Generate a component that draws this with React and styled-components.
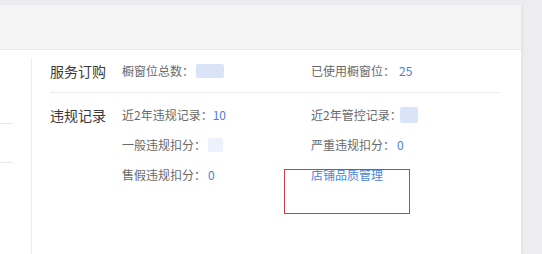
import React from 'react';
import styled, { createGlobalStyle } from 'styled-components';

const GlobalStyle = createGlobalStyle`
    html, body {
        margin: 0;
        padding: 0;
        background: #ededf1;
        font-family: "Noto Sans CJK SC", "Noto Sans", sans-serif;
    }
`;

const Page = styled.div`
    width: 542px;
    height: 254px;
    padding: 5px 21px 0 0;
    box-sizing: border-box;
    overflow: hidden;
`;

const Card = styled.div`
    background: #fff;
    height: 100%;
    box-shadow: 2px 0 2px rgba(0, 0, 0, 0.04);
    display: flex;
    flex-direction: column;
`;

const CardHeader = styled.div`
    height: 44px;
    background: #f5f5f6;
    border-bottom: 1px solid #ececee;
    flex-shrink: 0;
`;

const Body = styled.div`
    flex: 1;
    display: flex;
`;

const Side = styled.div`
    width: 32px;
    margin-top: 8px;
    border-right: 1px solid #ececec;
    padding-top: 27px;
    box-sizing: border-box;
`;

const SideItem = styled.div`
    width: 13px;
    height: 38px;
    border-bottom: 1px solid #e8e8e8;
`;

const Content = styled.div`
    flex: 1;
    padding: 6px 20px 0 18px;
`;

const Section = styled.div`
    display: flex;
    padding: ${p => p.$first ? '0 0 6px' : '7px 0 0'};
    border-bottom: ${p => p.$first ? '1px solid #ebebeb' : 'none'};
`;

const SectionTitle = styled.div`
    width: 72px;
    flex-shrink: 0;
    font-size: 14px;
    color: #3a3a3a;
    line-height: 30px;
`;

const Grid = styled.div`
    flex: 1;
    display: grid;
    grid-template-columns: 189px 1fr;
    grid-auto-rows: 30px;
`;

const Item = styled.div`
    position: relative;
    font-size: 12px;
    color: #6a6a6a;
    line-height: 30px;
    display: flex;
    align-items: center;
    white-space: nowrap;
`;

const Value = styled.span`
    color: #4a80d0;
    margin-left: ${p => p.$gap || 0}px;
`;

const Masked = styled.span`
    display: inline-block;
    width: ${p => p.$w}px;
    height: ${p => p.$h}px;
    margin-left: ${p => p.$gap || 0}px;
    background: ${p => p.$color || '#dae4f8'};
    border-radius: 2px;
    filter: blur(0.6px);
`;

const Link = styled.a`
    color: #4a86dc;
    font-size: 12px;
    text-decoration: none;
    cursor: pointer;
`;

const Highlight = styled.div`
    position: absolute;
    left: -27px;
    top: 9px;
    width: 126px;
    height: 45px;
    border: 1px solid #c8414a;
    box-sizing: border-box;
    pointer-events: none;
`;

const App = () => {
    return (
        <>
            <GlobalStyle />
            <Page>
                <Card>
                    <CardHeader />
                    <Body>
                        <Side>
                            <SideItem />
                            <SideItem />
                        </Side>
                        <Content>
                            <Section $first>
                                <SectionTitle>服务订购</SectionTitle>
                                <Grid>
                                    <Item>橱窗位总数：<Masked $w={28} $h={14} $gap={2} /></Item>
                                    <Item>已使用橱窗位：<Value $gap={4}>25</Value></Item>
                                </Grid>
                            </Section>
                            <Section>
                                <SectionTitle>违规记录</SectionTitle>
                                <Grid>
                                    <Item>近2年违规记录：<Value>10</Value></Item>
                                    <Item>近2年管控记录：<Masked $w={18} $h={16} $gap={-2} /></Item>
                                    <Item>一般违规扣分：<Masked $w={15} $h={14} $gap={2} $color="#edf1fb" /></Item>
                                    <Item>严重违规扣分：<Value $gap={2}>0</Value></Item>
                                    <Item>售假违规扣分：<Value $gap={2}>0</Value></Item>
                                    <Item>
                                        <Link>店铺品质管理</Link>
                                        <Highlight />
                                    </Item>
                                </Grid>
                            </Section>
                        </Content>
                    </Body>
                </Card>
            </Page>
        </>
    );
};

export default App;
